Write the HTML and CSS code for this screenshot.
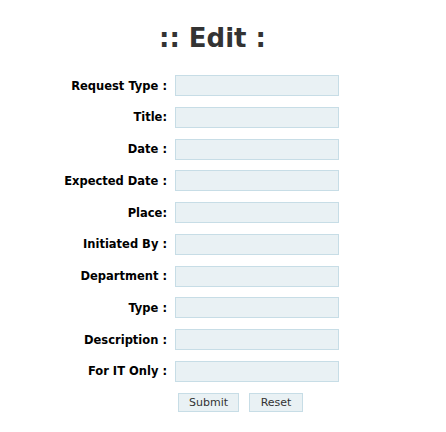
FILE: index.html
```html
<!DOCTYPE html>
<html>
<head>
<meta charset="utf-8">
<link rel="stylesheet" href="styles.css">
</head>
<body>
<h1 class="title">:: Edit :</h1>
<form class="form">
  <label class="lbl">Request Type :</label><input class="field" type="text">
  <label class="lbl">Title:</label><input class="field" type="text">
  <label class="lbl">Date :</label><input class="field" type="text">
  <label class="lbl">Expected Date :</label><input class="field" type="text">
  <label class="lbl">Place:</label><input class="field" type="text">
  <label class="lbl">Initiated By :</label><input class="field" type="text">
  <label class="lbl">Department :</label><input class="field" type="text">
  <label class="lbl">Type :</label><input class="field" type="text">
  <label class="lbl">Description :</label><input class="field" type="text">
  <label class="lbl">For IT Only :</label><input class="field" type="text">
  <div></div>
  <div class="actions">
    <button class="btn" type="button">Submit</button>
    <button class="btn" type="button">Reset</button>
  </div>
</form>
</body>
</html>
```
FILE: styles.css
```css
html, body {
  margin: 0;
  padding: 0;
  background: #fff;
}
body {
  width: 446px;
  font-family: "DejaVu Sans", Verdana, sans-serif;
}
.title {
  margin: 0;
  padding-top: 23px;
  padding-right: 21px;
  height: 53px;
  box-sizing: border-box;
  text-align: center;
  font-size: 26px;
  line-height: 30px;
  font-weight: bold;
  color: #333;
}
.form {
  display: grid;
  grid-template-columns: 167px 164px;
  column-gap: 8px;
  row-gap: 10.78px;
  align-items: center;
  margin-top: 22px;
}
.lbl {
  text-align: right;
  font-size: 11.5px;
  font-weight: bold;
  color: #000;
}
.field {
  box-sizing: border-box;
  width: 164px;
  height: 21px;
  margin: 0;
  padding: 0 3px;
  background: #e9f1f4;
  border: 1px solid #c7dde6;
  outline: none;
}
.actions {
  display: flex;
  gap: 10px;
  padding-left: 3px;
}
.btn {
  box-sizing: border-box;
  height: 19px;
  padding: 0 9px;
  margin: 0;
  font-family: "DejaVu Sans", Verdana, sans-serif;
  font-size: 11px;
  color: #333;
  background: #e9f1f4;
  border: 1px solid #c7dde6;
  border-radius: 0;
}
.btn:first-child { width: 61px; }
.btn:last-child { width: 54px; }
```
